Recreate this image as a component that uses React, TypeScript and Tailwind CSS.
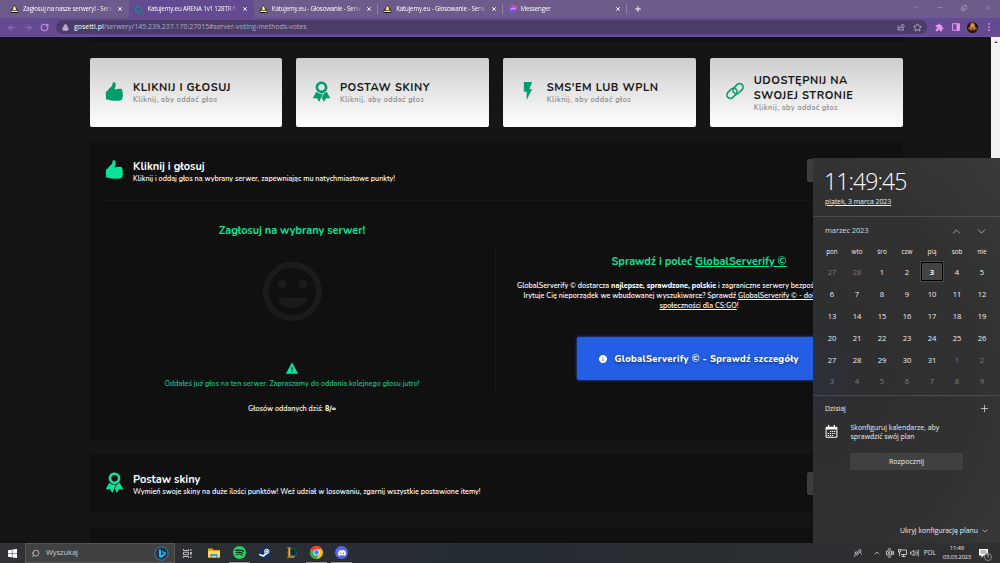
import type { ReactNode } from "react";
import { clsx } from "clsx";
import { IoIosThumbsUp, IoIosRibbon, IoMdFlash, IoMdHappy, IoMdWarning, IoMdInformationCircle } from "react-icons/io";
import { SiSpotify, SiDiscord } from "react-icons/si";
import { ArrowLeft, ArrowRight, ChevronDown, ChevronUp, Copy, Lock, Minus, Plus, RotateCw, Search, Star, X } from "lucide-react";

const NUNITO = "font-['Nunito','Lato',sans-serif]";
const SEGOE = "font-['Segoe_UI','Open_Sans',sans-serif]";

const tabs = [
  { title: "Zagłosuj na nasze serwery! - Serw", icon: "bell" },
  { title: "Katujemy.eu ARENA 1v1 128TR fu", icon: "ring", active: true },
  { title: "Katujemy.eu - Głosowanie - Serw", icon: "bell" },
  { title: "Katujemy.eu - Głosowanie - Serw", icon: "bell" },
  { title: "Messenger", icon: "messenger" },
];

function LinkIcon() {
  return (
    <svg viewBox="0 0 20 20" className="size-[20px]" fill="none" stroke="currentColor" strokeWidth="1.600">
      <g transform="rotate(-45 10 10)">
        <rect x="0.500" y="6" width="11.500" height="7" rx="3.500" />
        <rect x="8" y="7" width="11.500" height="7" rx="3.500" />
      </g>
    </svg>
  );
}

const methods = [
  { title: "KLIKNIJ I GŁOSUJ", icon: <IoIosThumbsUp size={23} /> },
  { title: "POSTAW SKINY", icon: <IoIosRibbon size={23} /> },
  { title: "SMS'EM LUB WPLN", icon: <IoMdFlash size={22} /> },
  { title: "UDOSTĘPNIJ NA SWOJEJ STRONIE", icon: <LinkIcon /> },
];

const dayNames = ["pon", "wto", "śro", "czw", "pią", "sob", "nie"];
const days = [27, 28, ...Array.from({ length: 31 }, (_, i) => i + 1), ...Array.from({ length: 9 }, (_, i) => i + 1)];
const TODAY = 4;

function Favicon({ type }: { type: string }) {
  if (type === "ring") {
    return (
      <svg viewBox="0 0 16 16" className="size-[9px] shrink-0">
        <circle cx="8" cy="8" r="5.6" fill="none" stroke="#0c8f7c" strokeWidth="2.4" />
        <path d="M8 0v3M8 13v3M0 8h3M13 8h3" stroke="#0c8f7c" strokeWidth="1.6" />
      </svg>
    );
  }
  if (type === "messenger") {
    return (
      <svg viewBox="0 0 16 16" className="ml-px size-[8px] shrink-0">
        <defs>
          <linearGradient id="msg" x1="0" y1="1" x2="1" y2="0">
            <stop offset="0" stopColor="#1a7cff" />
            <stop offset=".5" stopColor="#a33bf5" />
            <stop offset="1" stopColor="#ff6170" />
          </linearGradient>
        </defs>
        <path d="M8 0C3.4 0 0 3.300 0 7.700c0 2.400 1 4.300 2.600 5.700V16l2.500-1.300c.9.300 1.900.4 2.900.4 4.600 0 8-3.200 8-7.500S12.600 0 8 0z" fill="url(#msg)" />
        <path d="M3.500 9.500 6.500 6l3 2.500 3-2.500" fill="none" stroke="#fff" strokeWidth="1.500" />
      </svg>
    );
  }
  return (
    <svg viewBox="0 0 18 16" className="h-[8px] w-[9px] shrink-0">
      <path d="M9 0 17.500 13.500 15 16H3L.500 13.500z" fill="#15130f" />
      <path d="M9 2c2 1 2.500 3 3 6l2 3H4l2-3c.5-3 1-5 3-6z" fill="#f4d75c" />
      <path d="M8 4h2v4H8z" fill="#fff8dc" />
      <path d="M2 13h14" stroke="#f3e3a0" strokeWidth="2" />
    </svg>
  );
}

function TabBar() {
  return (
    <div className="flex h-[18px] items-stretch bg-[#6c5b8b] pl-[5px]">
      {tabs.map((tab, i) => (
        <div
          key={i}
          className={clsx(
            "relative flex w-[124.400px] items-center gap-[4px] pr-[6px] pl-[5px] text-white",
            tab.active && "rounded-t-[4px] bg-[#644a91]"
          )}
        >
          <Favicon type={tab.icon} />
          <span className="flex-1 overflow-hidden text-[6.2px] leading-[10px] whitespace-nowrap tracking-[-0.17px] [mask-image:linear-gradient(to_right,#000_88%,transparent)]">
            {tab.title}
          </span>
          <X className="size-[6px] shrink-0" strokeWidth={3.5} />
          {i > 1 && <span className="absolute right-0 top-1 h-[10px] w-px bg-[#8f80aa]" />}
        </div>
      ))}
      <Plus className="ml-[7px] size-[8px] self-center text-white" strokeWidth={3} />
      <div className="ml-auto flex items-center gap-[17px] pr-[9px] pb-[3px] text-[#a99dbd]">
        <ChevronDown className="size-[7px]" />
        <Minus className="size-[7px]" />
        <Copy className="size-[6px] -scale-y-100" strokeWidth={3} />
        <X className="size-[7px]" />
      </div>
    </div>
  );
}

function Toolbar() {
  return (
    <div className="flex h-[19px] items-center border-b border-[#6e529c] bg-[#644a91]">
      <ArrowLeft className="ml-[7px] size-[9px] text-[#9a73b5]" strokeWidth={2.5} />
      <ArrowRight className="ml-[8px] size-[9px] text-[#9a73b5]" strokeWidth={2.5} />
      <RotateCw className="ml-[7px] size-[9px] text-[#e796ee]" strokeWidth={2.6} />
      <div className="ml-[7px] flex h-[14px] w-[871px] items-center rounded-full bg-[#4b3d68] pl-[6px] pr-[5px] text-[#bcaed0]">
        <Lock className="size-[7px]" fill="currentColor" />
        <span className="ml-[5px] text-[6.950px] leading-[12px] text-[#b3a7c8]">
          <span className="text-white">gosetti.pl</span>/serwery/145.239.237.170:27015#server-voting-methods-votes
        </span>
        <svg viewBox="0 0 16 16" className="ml-auto size-[8px]" fill="none" stroke="currentColor" strokeWidth="1.500">
          <path d="M2 5v9h11v-3M5 11c0-4 3-6 6-6V2l4 4.500-4 4V8C9 8 7 9 5 11z" />
        </svg>
        <Star className="ml-[8px] size-[9px]" strokeWidth={2.5} />
      </div>
      <svg viewBox="0 0 24 24" className="ml-[8px] size-[9px]" fill="#e796ee">
        <path d="M20.500 11H19V7c0-1.100-.9-2-2-2h-4V3.500a2.500 2.500 0 0 0-5 0V5H4c-1.100 0-2 .9-2 2v3.800h1.500a2.700 2.700 0 0 1 0 5.400H2V20c0 1.100.9 2 2 2h3.800v-1.500a2.700 2.700 0 0 1 5.400 0V22H17c1.100 0 2-.9 2-2v-4h1.500a2.500 2.500 0 0 0 0-5z" />
      </svg>
      <svg viewBox="0 0 16 16" className="ml-[8px] size-[8px]">
        <path d="M1.200 1.500h13.600v13H1.200z" fill="none" stroke="#e796ee" strokeWidth="2" />
        <path d="M9 1h6v14H9z" fill="#e796ee" />
      </svg>
      <svg viewBox="0 0 22 22" className="ml-[7px] size-[11px]">
        <circle cx="11" cy="11" r="11" fill="#1b0f0b" />
        <path d="M7 3c2-3 6-3 8 0l1 6c3 1 4 4 3 7l-3-3-1 6-4-5-4 5-1-6-3 3c-1-3 0-6 3-7z" fill="#b96f31" />
        <path d="M8 5h6v4H8z" fill="#efa75a" />
      </svg>
      <svg viewBox="0 0 4 16" className="ml-[10px] h-[8px] w-[2px]" fill="#d98ae2">
        <circle cx="2" cy="2" r="1.800" />
        <circle cx="2" cy="8" r="1.800" />
        <circle cx="2" cy="14" r="1.800" />
      </svg>
    </div>
  );
}

function SectionHeader({ icon, title, text }: { icon: ReactNode; title: string; text: string }) {
  return (
    <div className="flex h-[59px] items-center pl-[13.500px] whitespace-nowrap">
      <div className="mb-[2px] flex w-[23px] justify-center text-[#0be39b]">{icon}</div>
      <div className="mt-[2px] ml-[7px]">
        <h2 className="text-[11px] leading-[14px] font-bold text-white">{title}</h2>
        <p className="text-[7.200px] leading-[10px] font-semibold text-white">{text}</p>
      </div>
      <div className="mr-[16px] ml-auto h-[23px] w-[80px] rounded-[2px] bg-[#3d3d3d]" />
    </div>
  );
}

function VotePanel() {
  return (
    <section className="h-[299px] rounded-[3px] bg-[#101010]">
      <SectionHeader
        icon={<IoIosThumbsUp size={23} />}
        title="Kliknij i głosuj"
        text="Kliknij i oddaj głos na wybrany serwer, zapewniając mu natychmiastowe punkty!"
      />
      <div className="mx-[15px] h-px bg-[#181818]" />
      <div className="flex">
        <div className="flex w-[405px] flex-col items-center pt-[23px]">
          <h3 className="text-[10.900px] leading-[14px] font-bold text-[#0be39b]">Zagłosuj na wybrany serwer!</h3>
          <IoMdHappy className="mt-[17px] text-[#1b1b1b]" size={73} />
          <IoMdWarning className="mt-[33px] text-[#0be39b]" size={14} />
          <p className="mt-[4px] text-[7.200px] leading-[10px] font-semibold text-[#0cc287]">
            Oddałeś już głos na ten serwer. Zapraszamy do oddania kolejnego głosu jutro!
          </p>
          <p className="mt-[15px] text-[7.200px] leading-[10px] font-semibold text-white">
            Głosów oddanych dziś: <b className="font-extrabold">8/∞</b>
          </p>
        </div>
        <div className="mt-[46px] h-[148px] w-px bg-[#1a1a1a]" />
        <div className="flex flex-1 flex-col items-center pt-[54px]">
          <h3 className="text-[10.950px] leading-[14px] font-bold text-[#0be39b]">
            Sprawdź i poleć <span className="underline">GlobalServerify ©</span>
          </h3>
          <div className="mt-[12px] text-center text-[7.200px] leading-[10px] font-semibold whitespace-nowrap text-white">
            <p>
              GlobalServerify © dostarcza <b className="font-extrabold">najlepsze, sprawdzone, polskie</b> i zagraniczne serwery bezpośrednio do gracza CS!
            </p>
            <p>
              Irytuje Cię nieporządek we wbudowanej wyszukiwarce? Sprawdź <span className="underline">GlobalServerify © - dołącz do największej</span>
            </p>
            <p>
              <span className="underline">społeczności dla CS:GO</span>!
            </p>
          </div>
          <button className="mt-[26px] flex h-[43px] w-[244px] items-center rounded-[2px] bg-[#245ee4] pt-px pl-[21px] text-[9.400px] font-extrabold tracking-[0.3px] whitespace-nowrap text-white shadow-[0_0_3px_#245ee4] [text-shadow:0_1px_3px_#0008]">
            <IoMdInformationCircle size={10} />
            <span className="ml-[6.500px]">GlobalServerify © - Sprawdź szczegóły</span>
          </button>
        </div>
      </div>
    </section>
  );
}

function Page() {
  return (
    <main className={clsx(NUNITO, "flex h-[506px] overflow-hidden bg-[#151515]")}>
      <div className="ml-[89.500px] w-[813px]">
        <div className="h-[5px] rounded-b-[3px] bg-[#101010]" />
        <div className="mt-[15.500px] grid h-[69px] grid-cols-4 gap-[14.500px]">
          {methods.map((m) => (
            <div key={m.title} className="flex items-center rounded-[2px] bg-linear-to-b from-[#cecece] to-white pl-[13.500px]">
              <div className="mb-[2px] flex w-[23px] justify-center text-[#059b6e]">{m.icon}</div>
              <div className="mt-px ml-[7px] flex-1 pr-[22px]">
                <h2 className="text-[11px] leading-[15px] font-bold tracking-[0.54px] text-[#161616]">{m.title}</h2>
                <p className="text-[7.300px] leading-[10px] font-semibold tracking-[0.45px] text-[#888888]">Kliknij, aby oddać głos</p>
              </div>
            </div>
          ))}
        </div>
        <div className="mt-[14.500px] flex flex-col gap-[14px]">
          <VotePanel />
          <section className="rounded-[3px] bg-[#101010]">
            <SectionHeader
              icon={<IoIosRibbon size={23} />}
              title="Postaw skiny"
              text="Wymień swoje skiny na duże ilości punktów! Weź udział w losowaniu, zgarnij wszystkie postawione itemy!"
            />
          </section>
          <section className="h-[60px] rounded-[3px] bg-[#101010]" />
        </div>
      </div>
      <div className="ml-auto flex w-[9px] justify-center bg-[#f1f1f1] pt-[4px]">
        <svg viewBox="0 0 8 4" className="h-[2px] w-[4px]">
          <path d="M4 0l4 4H0z" fill="#505050" />
        </svg>
      </div>
    </main>
  );
}

function CalendarFlyout() {
  return (
    <aside className="absolute top-[158px] right-0 h-[385px] w-[187px] bg-[radial-gradient(ellipse_at_0%_56%,#2b303a_0%,#2f2f30_22%,#313131_60%,#3a3a3a_100%)] text-[#eeeeee]">
      <div className="h-[59px] border-b border-[#4b4b4b] pl-[12px]">
        <p className="-ml-px pt-[7px] text-[23px] leading-[32px] font-light tracking-[-0.9px] text-white">11:49:45</p>
        <p className="text-[7px] leading-[9px] tracking-[-0.08px] underline">piątek, 3 marca 2023</p>
      </div>
      <div className="flex h-[27px] items-center pt-px pr-[12px] pl-[12px]">
        <span className="text-[7.500px] tracking-[-0.1px] text-[#d8d8d8]">marzec 2023</span>
        <ChevronUp className="ml-auto size-[13px] text-[#bdbdbd]" strokeWidth={1.500} />
        <ChevronDown className="ml-[12px] size-[13px] text-[#bdbdbd]" strokeWidth={1.500} />
      </div>
      <div className="ml-[6.500px] grid w-[175px] grid-cols-7 text-center">
        {dayNames.map((name) => (
          <span key={name} className="h-[17px] text-[6.300px] leading-[15px]">
            {name}
          </span>
        ))}
        {days.map((day, i) => (
          <div key={i} className="flex h-[21.900px] items-center justify-center">
            <span
              className={clsx(
                "flex h-[19px] w-[22px] items-center justify-center text-[7.600px] leading-[10px]",
                (i < 2 || i > 32) && "text-[#7d7d7d]",
                i === TODAY && "border border-black bg-[#434343] font-bold outline outline-[#4a4a4a]"
              )}
            >
              {day}
            </span>
          </div>
        ))}
      </div>
      <div className="mt-[2.600px] border-t border-[#4b4b4b] pl-[12px] pr-[10px]">
        <div className="flex h-[26px] items-center">
          <span className="text-[7px]">Dzisiaj</span>
          <Plus className="ml-auto size-[11px]" strokeWidth={1.500} />
        </div>
        <div className="flex pt-px">
          <svg viewBox="0 0 24 26" className="mt-[2px] h-[13px] w-[13px]">
            <path d="M1.200 4.500h21.600v20H1.200z" fill="none" stroke="#fff" strokeWidth="2" />
            <path d="M1 4h22v5H1zM5 0h2.500v5H5zM16.500 0H19v5h-2.500z" fill="#fff" />
            <path d="M9 13h11M4.500 17h15.500M4.500 21h11" stroke="#fff" strokeWidth="2.400" strokeDasharray="2.600 1.500" />
          </svg>
          <p className="ml-[12.500px] text-[6.900px] leading-[9.500px]">
            Skonfiguruj kalendarze, aby
            <br />
            sprawdzić swój plan
          </p>
        </div>
      </div>
      <button className="mt-[11px] ml-[37px] block h-[17px] w-[113px] bg-[#404040] text-[7.100px]">Rozpocznij</button>
      <div className="absolute right-[11px] bottom-[7px] flex items-center gap-[3px] text-[6.900px] leading-[10px]">
        Ukryj konfigurację planu
        <ChevronDown className="size-[8px]" strokeWidth={1.800} />
      </div>
    </aside>
  );
}

function TaskbarApp({ children, running }: { children: ReactNode; running?: boolean }) {
  return (
    <div className={clsx("flex h-full w-[21px] items-center justify-center border-b", running ? "border-[#8f9094]" : "border-transparent")}>
      {children}
    </div>
  );
}

function Taskbar() {
  return (
    <footer className="flex h-[20px] items-center bg-linear-to-r from-[#303236] via-[#252c33] to-[#303030] text-[#e6e6e6]">
      <svg viewBox="0 0 18 18" className="ml-[8px] size-[9px]" fill="#fff">
        <path d="M0 2.500 7.800 1.400V8.500H0zM8.800 1.200 18 0v8.500H8.800zM0 9.500h7.800v7.100L0 15.500zM8.800 9.500H18V18L8.800 16.800z" />
      </svg>
      <div className="ml-[8px] flex h-full w-[150px] items-center border border-[#565656] bg-[#414141] pl-[5px] pr-[5px]">
        <Search className="size-[9px] -scale-x-100" strokeWidth={1.800} />
        <span className="ml-[6px] text-[7.400px] text-[#cfcfcf]">Wyszukaj</span>
        <svg viewBox="0 0 30 30" className="ml-auto size-[15px]">
          <circle cx="15" cy="15" r="13.500" fill="#263447" stroke="#2d81c7" strokeWidth="2" />
          <path d="M10 6l4 1.500v11l7-3-4-2-1.500-4 8 3.500v4L14 24l-4-3z" fill="#2eb3f2" />
        </svg>
      </div>
      <svg viewBox="0 0 20 18" className="ml-[7px] h-[9px] w-[11px]" fill="none" stroke="#e2e2e2" strokeWidth="1.600">
        <path d="M2 0v3h10V0M2 6.500h10v5H2zM2 18v-3h10v3M17 0v4M17 14v4" />
        <path d="M15.500 6h3v5h-3z" fill="#e2e2e2" stroke="none" />
      </svg>
      <div className="ml-[10.500px] flex h-full gap-[4.500px]">
        <TaskbarApp>
          <svg viewBox="0 0 24 20" className="h-[10px] w-[12px]">
            <path d="M0 1h9l2 3h13v15H0z" fill="#e9a913" />
            <path d="M0 6h24v13H0z" fill="#ffd75e" />
            <path d="M5 20v-8h14v8h-3v-4H8v4z" fill="#3c9be8" />
          </svg>
        </TaskbarApp>
        <TaskbarApp running>
          <span className="rounded-full bg-[#101010]">
            <SiSpotify size={13} color="#1ed760" />
          </span>
        </TaskbarApp>
        <TaskbarApp>
          <svg viewBox="0 0 24 24" className="size-[12px]">
            <circle cx="12" cy="12" r="12" fill="#12306b" />
            <path d="M0 13l8 3 5-4 5 1-6 4a4 4 0 0 1-7 1l-4-1z" fill="#fff" />
            <circle cx="15.500" cy="9" r="4.500" fill="#12306b" stroke="#fff" strokeWidth="2" />
            <circle cx="15.500" cy="9" r="2.500" fill="#fff" />
          </svg>
        </TaskbarApp>
        <TaskbarApp>
          <svg viewBox="0 0 24 24" className="size-[12px]">
            <circle cx="14" cy="12" r="9" fill="#0b2d38" stroke="#14657a" strokeWidth="2" />
            <path d="M4 0h7v17h9l-2 5H4l2-4V4z" fill="#a87a30" />
            <path d="M8 3h2v15H8z" fill="#e0b45c" />
          </svg>
        </TaskbarApp>
        <TaskbarApp running>
          <svg viewBox="0 0 48 48" className="size-[13px]">
            <circle cx="24" cy="24" r="24" fill="#fbc116" />
            <path d="M3.200 12A24 24 0 0 1 44.800 12H24L14 30z" fill="#ea4335" />
            <path d="M3.200 12A24 24 0 0 0 24 48L34 30H14z" fill="#34a853" />
            <circle cx="24" cy="24" r="11.500" fill="#fff" />
            <circle cx="24" cy="24" r="8.800" fill="#4285f4" />
          </svg>
        </TaskbarApp>
        <TaskbarApp running>
          <span className="flex size-[13px] items-center justify-center rounded-full bg-[#5865f2]">
            <SiDiscord size={8} color="#fff" />
          </span>
        </TaskbarApp>
      </div>
      <svg viewBox="0 0 16 16" className="ml-auto size-[8px]" fill="none" stroke="currentColor" strokeWidth="1.400">
        <circle cx="4.500" cy="8" r="2.500" />
        <circle cx="11.500" cy="3.500" r="2.500" />
        <path d="M1 16c0-6 4-6 6-3M8 11c1-6 6-6 7 0" />
      </svg>
      <ChevronUp className="ml-[11px] size-[8px]" />
      <svg viewBox="0 0 16 20" className="ml-[5px] h-[10px] w-[8px]" fill="none" stroke="currentColor" strokeWidth="1.600">
        <path d="M1 6h10v8H1zM11 9l4-2v6l-4-2M4 2h6M4 18h6" />
        <circle cx="6" cy="10" r="1.500" />
      </svg>
      <svg viewBox="0 0 18 16" className="ml-[4px] h-[8px] w-[9px]" fill="none" stroke="currentColor" strokeWidth="1.600">
        <path d="M5 2h12v9H6M11 11v4M7 15h8M1 1h4v5H1zM3 6v8" />
      </svg>
      <svg viewBox="0 0 18 16" className="ml-[3px] h-[8px] w-[9px]" fill="none" stroke="currentColor" strokeWidth="1.400">
        <path d="M1 6h3l4-4v12l-4-4H1zM11 5c1 2 1 4 0 6M13.500 3c2 3 2 7 0 10M16 1c2.500 4 2.500 10 0 14" />
      </svg>
      <span className="ml-[5px] text-[6.300px]">POL</span>
      <div className="ml-[7px] text-center text-[5.950px] leading-[9px] tracking-[-0.2px]">
        <p>11:49</p>
        <p>03.03.2023</p>
      </div>
      <div className="relative mr-[12px] ml-[8px]">
        <svg viewBox="0 0 18 18" className="size-[9px]">
          <path d="M0 0h18v13H9l-4 5v-5H0z" fill="#fff" />
          <path d="M3 4h12M3 8h12" stroke="#333" strokeWidth="1.300" />
        </svg>
        <span className="absolute top-[4px] left-[5px] flex size-[8px] items-center justify-center rounded-full border border-[#888] bg-[#2c2c2c] text-[6px]">1</span>
      </div>
    </footer>
  );
}

export default function App() {
  return (
    <div className={clsx(SEGOE, "relative flex h-[563px] w-[1000px] flex-col overflow-hidden bg-[#151515]")}>
      <TabBar />
      <Toolbar />
      <Page />
      <Taskbar />
      <CalendarFlyout />
    </div>
  );
}
